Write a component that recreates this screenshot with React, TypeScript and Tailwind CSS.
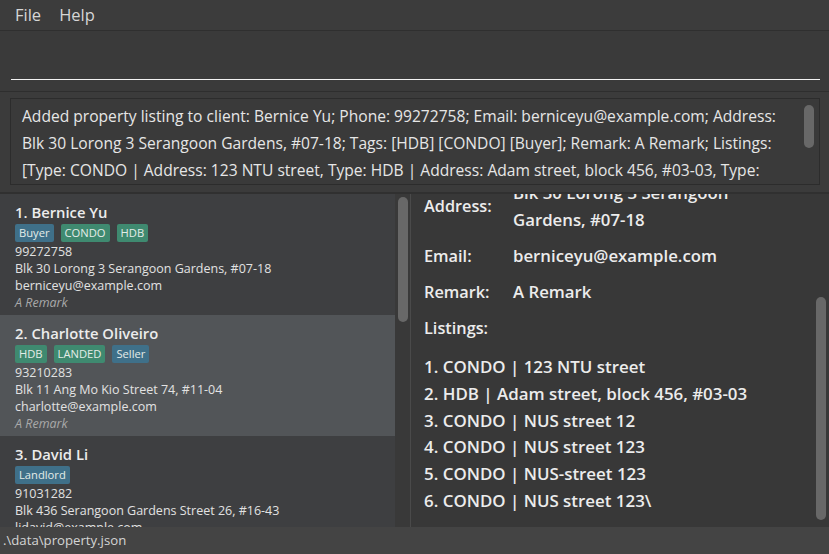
import React from 'react';

type Tag = { label: string; kind: 'role' | 'type' };

interface Client {
  name: string;
  tags: Tag[];
  phone: string;
  address: string;
  email: string;
  remark: string;
}

const clients: Client[] = [
  {
    name: 'Bernice Yu',
    tags: [
      { label: 'Buyer', kind: 'role' },
      { label: 'CONDO', kind: 'type' },
      { label: 'HDB', kind: 'type' },
    ],
    phone: '99272758',
    address: 'Blk 30 Lorong 3 Serangoon Gardens, #07-18',
    email: 'berniceyu@example.com',
    remark: 'A Remark',
  },
  {
    name: 'Charlotte Oliveiro',
    tags: [
      { label: 'HDB', kind: 'type' },
      { label: 'LANDED', kind: 'type' },
      { label: 'Seller', kind: 'role' },
    ],
    phone: '93210283',
    address: 'Blk 11 Ang Mo Kio Street 74, #11-04',
    email: 'charlotte@example.com',
    remark: 'A Remark',
  },
  {
    name: 'David Li',
    tags: [{ label: 'Landlord', kind: 'role' }],
    phone: '91031282',
    address: 'Blk 436 Serangoon Gardens Street 26, #16-43',
    email: 'lidavid@example.com',
    remark: 'A Remark',
  },
];

const resultLines = [
  'Added property listing to client: Bernice Yu; Phone: 99272758; Email: berniceyu@example.com; Address:',
  'Blk 30 Lorong 3 Serangoon Gardens, #07-18; Tags: [HDB] [CONDO] [Buyer]; Remark: A Remark; Listings:',
  '[Type: CONDO | Address: 123 NTU street, Type: HDB | Address: Adam street, block 456, #03-03, Type:',
];

const listings = [
  'CONDO | 123 NTU street',
  'HDB | Adam street, block 456, #03-03',
  'CONDO | NUS street 12',
  'CONDO | NUS street 123',
  'CONDO | NUS-street 123',
  'CONDO | NUS street 123\\',
];

const font = { fontFamily: '"Open Sans", "Noto Sans", sans-serif' };

const ClientCard: React.FC<{ client: Client; index: number; selected: boolean }> = ({ client, index, selected }) => (
  <div className={`h-[121px] shrink-0 pl-[15px] pt-[7px] ${selected ? 'bg-[#525558]' : 'bg-[#3e3f41]'}`}>
    <div className="text-[14.8px] leading-[22px] font-semibold text-[#ececec] whitespace-nowrap">
      {index}. {client.name}
    </div>
    <div className="flex gap-[7px] mt-[1px] mb-[1px]">
      {client.tags.map(tag => (
        <span
          key={tag.label}
          className={`h-[18px] px-[4px] rounded-[2px] text-[11.2px] leading-[18px] text-[#e4ece8] ${
            tag.kind === 'role' ? 'bg-[#3f7089]' : 'bg-[#3f8a70]'
          }`}
        >
          {tag.label}
        </span>
      ))}
    </div>
    <div className="text-[12.5px] leading-[17px] text-[#e2e2e2] whitespace-nowrap">
      <div>{client.phone}</div>
      <div>{client.address}</div>
      <div>{client.email}</div>
      <div className="italic text-[#a9a9a9]">{client.remark}</div>
    </div>
  </div>
);

export default function App() {
  return (
    <div style={font} className="w-[829px] h-[554px] flex flex-col bg-[#3a3a3a] overflow-hidden select-none">
      {/* menu bar */}
      <div className="h-[31px] shrink-0 flex items-center gap-[18px] pl-[15px] bg-[#3c3c3c] border-b border-[#2f2f2f] text-[16.5px] text-[#d6d6d6]">
        <span>File</span>
        <span>Help</span>
      </div>

      {/* command box */}
      <div className="h-[61px] shrink-0 pl-[11px] pr-[9px] bg-[#3a3a3a] border-b border-[#2e2e2e]">
        <div className="h-[49px] border-b-[1.5px] border-[#f2f2f2]" />
      </div>

      {/* result display */}
      <div className="h-[102px] shrink-0 pl-[10px] pr-[9px] pt-[6px] bg-[#3b3b3b] border-b-2 border-[#303030]">
        <div className="h-[87px] relative bg-[#3a3a3a] border border-[#2c2c2c] overflow-hidden">
          <div className="pl-[11px] pt-[4px] text-[15.6px] leading-[27px] text-[#e6e6e6] whitespace-nowrap">
            {resultLines.map((l, i) => (
              <div key={i}>{l}</div>
            ))}
          </div>
          <div className="absolute right-[5px] top-[6px] w-[10px] h-[43px] rounded-full bg-[#686868]" />
        </div>
      </div>

      {/* main split */}
      <div className="flex flex-1 min-h-0">
        <div className="w-[410px] shrink-0 flex bg-[#393939]">
          <div className="w-[395px] flex flex-col overflow-hidden">
            {clients.map((c, i) => (
              <ClientCard key={c.name} client={c} index={i + 1} selected={i === 1} />
            ))}
          </div>
          <div className="flex-1 pt-[3px] pl-[3px]">
            <div className="w-[10px] h-[125px] rounded-full bg-[#686868]" />
          </div>
        </div>
        <div className="flex-1 relative bg-[#383838] border-l border-[#4a4a4a] overflow-hidden">
          <div className="-mt-[20px] pl-[13px] text-[#ececec] whitespace-nowrap">
            <div className="flex h-[64px] items-center">
              <span className="w-[89px] text-[16.3px] font-semibold">Address:</span>
              <div className="text-[16.8px] leading-[27px] font-semibold">
                <div>Blk 30 Lorong 3 Serangoon</div>
                <div>Gardens, #07-18</div>
              </div>
            </div>
            <div className="flex h-[36px] items-center">
              <span className="w-[89px] text-[16.3px] font-semibold">Email:</span>
              <span className="text-[16.8px] font-semibold">berniceyu@example.com</span>
            </div>
            <div className="flex h-[36px] items-center">
              <span className="w-[89px] text-[16.3px] font-semibold">Remark:</span>
              <span className="text-[16.8px] font-semibold">A Remark</span>
            </div>
            <div className="flex h-[37px] items-center">
              <span className="text-[16.3px] font-semibold">Listings:</span>
            </div>
            <div className="mt-[7px] text-[16.9px] leading-[26.8px] font-semibold">
              {listings.map((l, i) => (
                <div key={i}>
                  {i + 1}. {l}
                </div>
              ))}
            </div>
          </div>
          <div className="absolute right-[3px] top-[103px] w-[10px] h-[223px] rounded-full bg-[#686868]" />
        </div>
      </div>

      {/* status bar */}
      <div className="h-[27px] shrink-0 flex items-center pl-[3px] bg-[#444444] text-[13.2px] text-[#d4d4d4]">
        .\data\property.json
      </div>
    </div>
  );
}
